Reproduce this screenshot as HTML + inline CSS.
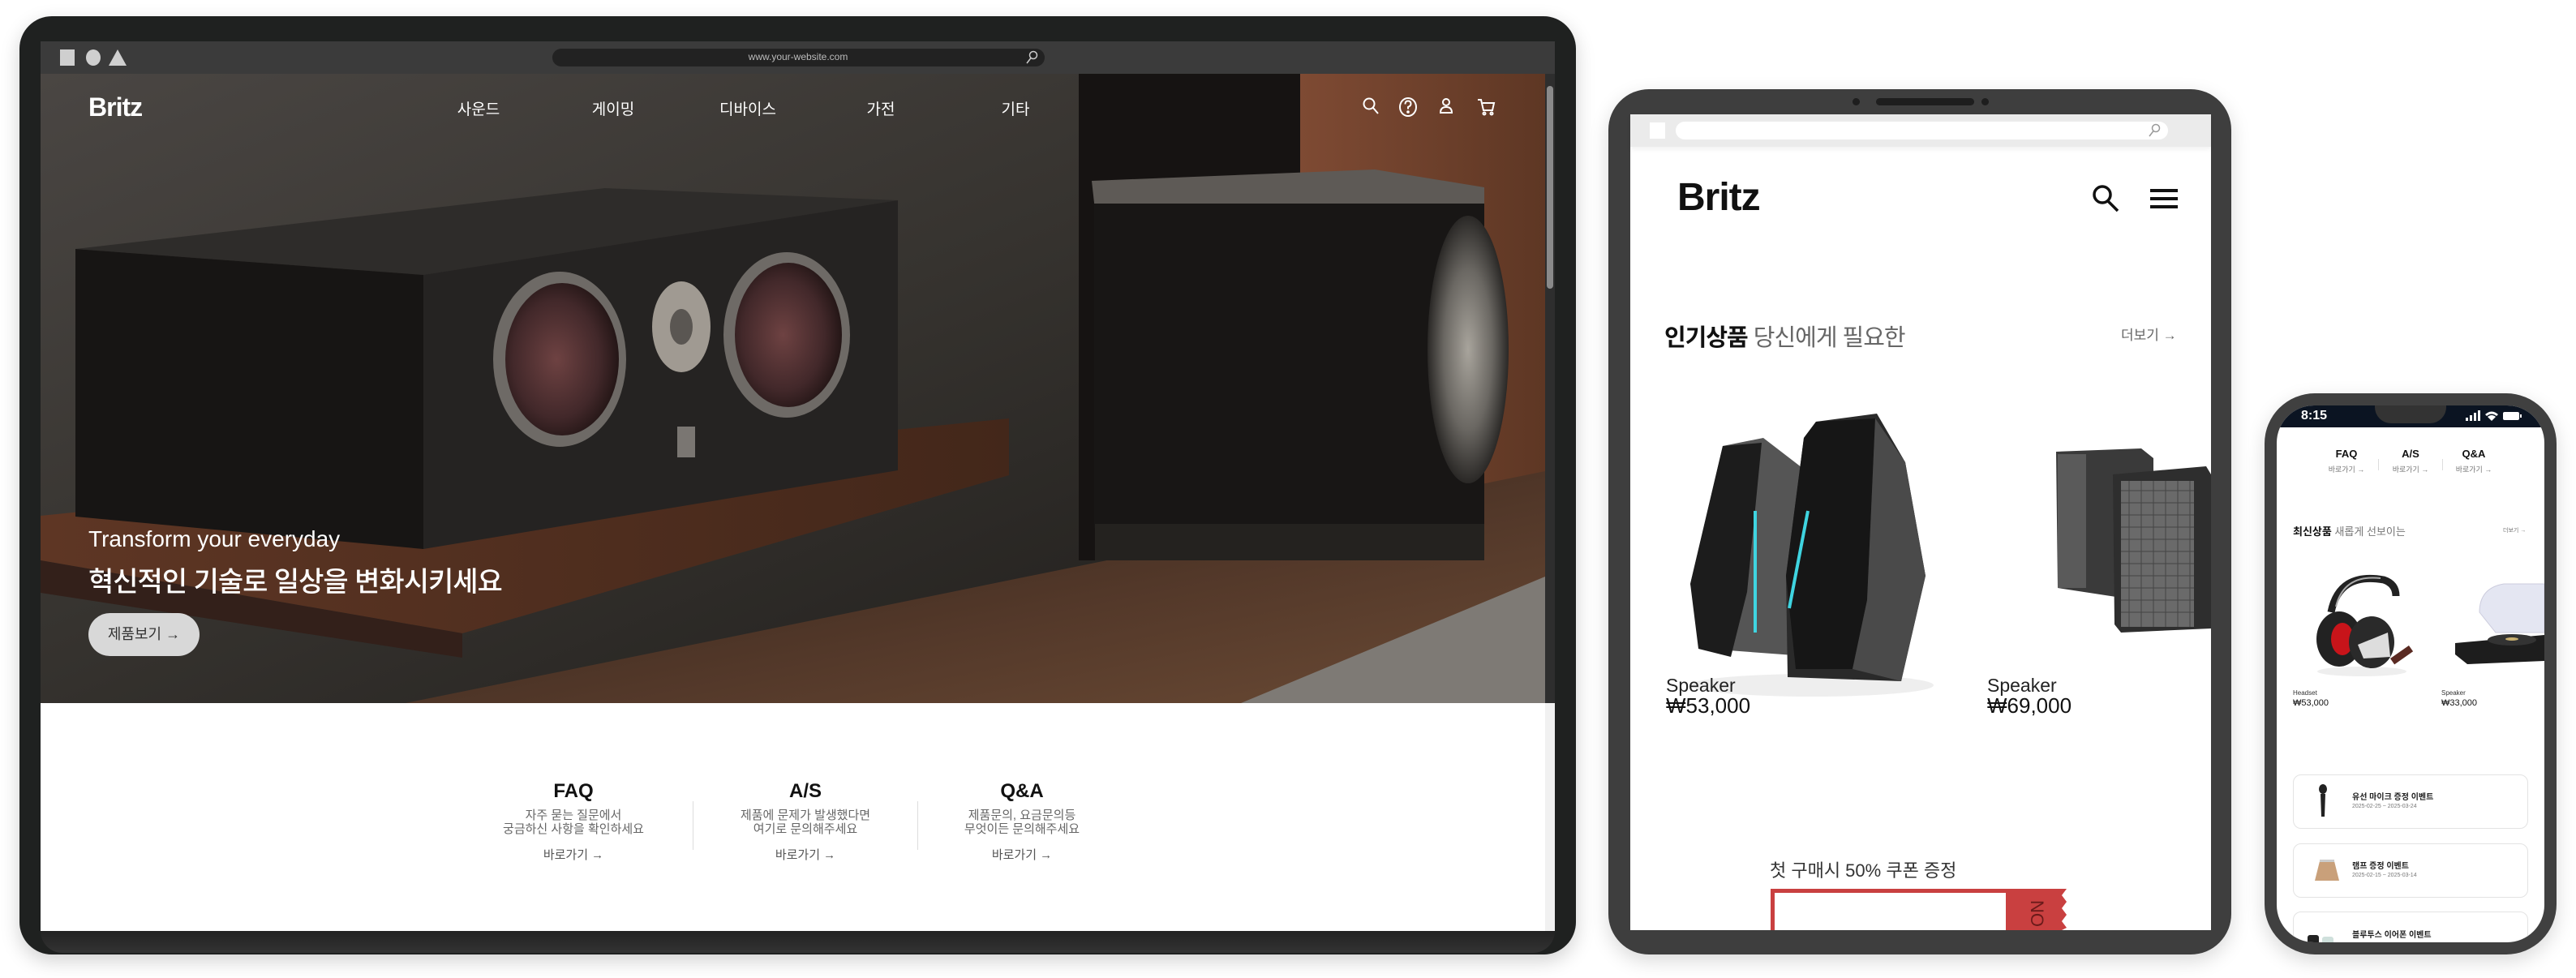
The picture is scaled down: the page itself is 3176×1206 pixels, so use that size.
<!DOCTYPE html>
<html><head><meta charset="utf-8">
<style>
*{margin:0;padding:0;box-sizing:border-box}
body{width:3176px;height:1206px;background:#fff;position:relative;overflow:hidden;font-family:"Liberation Sans","Noto Sans CJK KR",sans-serif}
.a{position:absolute}
.kr{font-family:"Liberation Sans","Noto Sans CJK KR",sans-serif}
.c{transform:translateX(-50%);white-space:nowrap;text-align:center}
</style></head><body>

<!-- LAPTOP -->
<div class="a" style="left:24px;top:20px;width:1919px;height:1157px;background:#1f2120;border-radius:40px;box-shadow:0 8px 24px rgba(0,0,0,.18)"></div>
<div class="a" style="left:50px;top:51px;width:1867px;height:40px;background:#3b3b3b"></div>
<div class="a" style="left:74px;top:61px;width:18px;height:20px;background:#cfcfcf"></div>
<div class="a" style="left:106px;top:61px;width:18px;height:20px;background:#cfcfcf;border-radius:50%"></div>
<div class="a" style="left:134px;top:61px;width:0;height:0;border-left:11px solid transparent;border-right:11px solid transparent;border-bottom:20px solid #cfcfcf"></div>
<div class="a" style="left:681px;top:60px;width:607px;height:22px;background:#222;border-radius:11px"></div>
<div class="a c" style="left:984px;top:63px;font-size:12px;color:#bbb">www.your-website.com</div>
<svg class="a" style="left:1264px;top:62px" width="16" height="18" viewBox="0 0 16 18"><circle cx="10" cy="6" r="4.5" fill="none" stroke="#ccc" stroke-width="1.5"/><line x1="7" y1="9.5" x2="2" y2="16" stroke="#ccc" stroke-width="1.5"/></svg>

<!-- hero -->
<svg class="a" style="left:50px;top:91px" width="1855" height="776" viewBox="0 0 1855 776">
<defs>
<linearGradient id="wall" x1="0" y1="0" x2="1" y2="1"><stop offset="0" stop-color="#4a4643"/><stop offset=".45" stop-color="#36332f"/><stop offset="1" stop-color="#1c1a18"/></linearGradient>
<linearGradient id="wood" x1="0" y1="0" x2="1" y2="0"><stop offset="0" stop-color="#5e3624"/><stop offset="1" stop-color="#43271a"/></linearGradient>
<linearGradient id="floor" x1="0" y1="0" x2="1" y2="1"><stop offset="0" stop-color="#2e2018"/><stop offset=".6" stop-color="#54392a"/><stop offset="1" stop-color="#6a4a34"/></linearGradient>
<linearGradient id="panel" x1="0" y1="0" x2="1" y2="0"><stop offset="0" stop-color="#7e4a33"/><stop offset="1" stop-color="#5e3724"/></linearGradient>
<radialGradient id="drv" cx=".45" cy=".5" r=".55"><stop offset="0" stop-color="#6e4242"/><stop offset=".7" stop-color="#42282a"/><stop offset="1" stop-color="#241616"/></radialGradient>
<radialGradient id="sub" cx=".5" cy=".5" r=".5"><stop offset="0" stop-color="#a8a49c"/><stop offset=".6" stop-color="#6a6762"/><stop offset="1" stop-color="#2a2826"/></radialGradient>
</defs>
<rect width="1855" height="776" fill="url(#wall)"/>
<rect x="1280" y="0" width="300" height="600" fill="#161312"/>
<rect x="1553" y="0" width="302" height="560" fill="url(#panel)"/>
<polygon points="450,776 1855,490 1855,776" fill="url(#floor)"/>
<polygon points="1480,776 1855,620 1855,776" fill="#7e7a75"/>
<!-- subwoofer -->
<polygon points="1296,132 1645,118 1780,140 1780,170 1300,168" fill="#5e5a56"/>
<rect x="1299" y="160" width="481" height="400" fill="#181615"/>
<rect x="1300" y="555" width="480" height="45" fill="#24221f"/>
<ellipse cx="1760" cy="340" rx="50" ry="165" fill="url(#sub)"/>
<!-- shelf -->
<polygon points="0,545 1194,425 1194,495 520,690 0,600" fill="url(#wood)"/>
<polygon points="0,600 520,690 520,720 0,640" fill="#33201a"/>
<!-- center speaker -->
<polygon points="43,216 696,141 1057,156 472,248" fill="#2e2c2a"/>
<polygon points="43,216 472,248 472,586 43,546" fill="#171514"/>
<polygon points="472,248 1057,156 1057,489 472,586" fill="#252322"/>
<ellipse cx="640" cy="352" rx="82" ry="108" fill="#6e6a66"/>
<ellipse cx="643" cy="352" rx="70" ry="94" fill="url(#drv)"/>
<ellipse cx="920" cy="322" rx="78" ry="102" fill="#6e6a66"/>
<ellipse cx="922" cy="322" rx="66" ry="89" fill="url(#drv)"/>
<ellipse cx="790" cy="312" rx="36" ry="56" fill="#a09a92"/>
<ellipse cx="790" cy="312" rx="14" ry="22" fill="#5a5652"/>
<rect x="785" y="435" width="22" height="38" fill="#7a7672"/>
</svg>
<div class="a" style="left:109px;top:114px;font-size:32px;font-weight:bold;color:#fff;letter-spacing:-1px">Britz</div>
<div class="a c kr" style="left:590px;top:120px;font-size:19px;color:#fff">사운드</div>
<div class="a c kr" style="left:756px;top:120px;font-size:19px;color:#fff">게이밍</div>
<div class="a c kr" style="left:922px;top:120px;font-size:19px;color:#fff">디바이스</div>
<div class="a c kr" style="left:1086px;top:120px;font-size:19px;color:#fff">가전</div>
<div class="a c kr" style="left:1252px;top:120px;font-size:19px;color:#fff">기타</div>
<svg class="a" style="left:1678px;top:118px" width="170" height="28" viewBox="0 0 170 28" fill="none" stroke="#fff" stroke-width="2">
<circle cx="10" cy="10" r="6.5"/><line x1="15" y1="15" x2="21" y2="22"/>
<ellipse cx="58" cy="14" rx="10" ry="11"/><path d="M54.5 10.5 q0-4 3.5-4 q3.5 0 3.5 3.5 q0 2.5-3.5 4 v2.5"/><circle cx="58" cy="20" r=".8" fill="#fff"/>
<circle cx="105" cy="8" r="4"/><path d="M98 21 q0-7 7-7 q7 0 7 7 z"/>
<path d="M144 5 h4 l3 13 h11 l2-9 h-14"/><circle cx="152" cy="22" r="1.5"/><circle cx="161" cy="22" r="1.5"/>
</svg>
<div class="a" style="left:109px;top:649px;font-size:28px;color:#fff">Transform your everyday</div>
<div class="a kr" style="left:109px;top:690px;font-size:34px;color:#fff;font-weight:500;letter-spacing:-1px">혁신적인 기술로 일상을 변화시키세요</div>
<div class="a kr" style="left:109px;top:756px;width:137px;height:53px;background:#d8d8d8;border-radius:27px;font-size:18px;color:#333;line-height:53px;text-align:center">제품보기 →</div>

<!-- white section -->
<div class="a" style="left:50px;top:867px;width:1855px;height:281px;background:#fff"></div>
<div class="a" style="left:1905px;top:91px;width:12px;height:776px;background:#2e2e2e"></div>
<div class="a" style="left:1905px;top:867px;width:12px;height:281px;background:#f1f1f1"></div>
<div class="a" style="left:1907px;top:106px;width:8px;height:250px;background:#8a8a8a;border-radius:4px"></div>

<div class="a c" style="left:707px;top:962px;font-size:24px;font-weight:bold;color:#111">FAQ</div>
<div class="a c kr" style="left:707px;top:997px;font-size:15px;line-height:17px;color:#666">자주 묻는 질문에서<br>궁금하신 사항을 확인하세요</div>
<div class="a c kr" style="left:707px;top:1043px;font-size:15px;color:#555">바로가기 →</div>
<div class="a" style="left:854px;top:988px;width:1px;height:60px;background:#ddd"></div>
<div class="a c" style="left:993px;top:962px;font-size:24px;font-weight:bold;color:#111">A/S</div>
<div class="a c kr" style="left:993px;top:997px;font-size:15px;line-height:17px;color:#666">제품에 문제가 발생했다면<br>여기로 문의해주세요</div>
<div class="a c kr" style="left:993px;top:1043px;font-size:15px;color:#555">바로가기 →</div>
<div class="a" style="left:1131px;top:988px;width:1px;height:60px;background:#ddd"></div>
<div class="a c" style="left:1260px;top:962px;font-size:24px;font-weight:bold;color:#111">Q&amp;A</div>
<div class="a c kr" style="left:1260px;top:997px;font-size:15px;line-height:17px;color:#666">제품문의, 요금문의등<br>무엇이든 문의해주세요</div>
<div class="a c kr" style="left:1260px;top:1043px;font-size:15px;color:#555">바로가기 →</div>
<div class="a" style="left:50px;top:1148px;width:1867px;height:27px;background:linear-gradient(#222,#333);border-radius:0 0 30px 30px"></div>

<!-- TABLET -->
<div class="a" style="left:1983px;top:110px;width:768px;height:1067px;background:#3e3e3e;border-radius:50px;box-shadow:0 8px 24px rgba(0,0,0,.15)"></div>
<div class="a" style="left:2284px;top:121px;width:9px;height:9px;background:#1e1e1e;border-radius:50%"></div>
<div class="a" style="left:2313px;top:121px;width:121px;height:9px;background:#1e1e1e;border-radius:5px"></div>
<div class="a" style="left:2443px;top:121px;width:9px;height:9px;background:#1e1e1e;border-radius:50%"></div>
<div class="a" style="left:2010px;top:141px;width:716px;height:1006px;background:#fff"></div>
<div class="a" style="left:2010px;top:141px;width:716px;height:40px;background:#ebebeb;box-shadow:0 3px 6px rgba(0,0,0,.06)"></div>
<div class="a" style="left:2034px;top:151px;width:19px;height:20px;background:#fff"></div>
<div class="a" style="left:2066px;top:150px;width:607px;height:22px;background:#fff;border-radius:11px"></div>
<svg class="a" style="left:2648px;top:152px" width="16" height="18" viewBox="0 0 16 18"><circle cx="10" cy="6" r="4.5" fill="none" stroke="#999" stroke-width="1.5"/><line x1="7" y1="9.5" x2="2" y2="16" stroke="#999" stroke-width="1.5"/></svg>
<div class="a" style="left:2068px;top:216px;font-size:48px;font-weight:bold;color:#111;letter-spacing:-1px">Britz</div>
<svg class="a" style="left:2578px;top:227px" width="38" height="36" viewBox="0 0 38 36" fill="none" stroke="#111" stroke-width="3.5"><circle cx="14" cy="13" r="10"/><line x1="21" y1="21" x2="33" y2="33"/></svg>
<svg class="a" style="left:2651px;top:233px" width="36" height="26" viewBox="0 0 36 26" fill="#111"><rect x="0" y="0" width="34" height="4"/><rect x="0" y="10" width="34" height="4"/><rect x="0" y="20" width="34" height="4"/></svg>
<div class="a kr" style="left:2052px;top:393px;font-size:29px;color:#111;font-weight:bold;letter-spacing:-1px">인기상품 <span style="font-weight:normal;color:#666">당신에게 필요한</span></div>
<div class="a kr" style="left:2615px;top:399px;font-size:17px;color:#666">더보기 →</div>
<svg class="a" style="left:2054px;top:480px" width="350" height="390" viewBox="0 0 350 390">
<ellipse cx="180" cy="365" rx="150" ry="14" fill="#eee"/>
<polygon points="70,70 120,60 185,110 185,330 50,320 30,240" fill="#555"/>
<polygon points="70,70 118,66 100,250 80,330 40,320 30,240" fill="#1c1c1c"/>
<line x1="110" y1="150" x2="110" y2="300" stroke="#3fd4e0" stroke-width="4"/>
<polygon points="185,40 260,30 295,90 320,230 290,360 150,355 148,230 170,60" fill="#2a2a2a"/>
<polygon points="185,40 258,36 248,260 230,345 160,345 148,230 170,60" fill="#161616"/>
<line x1="152" y1="270" x2="175" y2="150" stroke="#3fd4e0" stroke-width="4"/>
<line x1="272" y1="140" x2="262" y2="320" stroke="#3fd4e0" stroke-width="4"/>
<polygon points="258,36 295,90 320,230 290,360 230,345 248,260" fill="#4a4a4a"/>
</svg>
<svg class="a" style="left:2515px;top:545px" width="211" height="240" viewBox="0 0 211 240">
<polygon points="20,12 125,8 140,20 140,190 120,195 22,180" fill="#3a3a3a"/>
<rect x="22" y="15" width="35" height="165" fill="#5a5a5a"/>
<polygon points="90,40 205,30 211,40 211,230 100,235 92,225" fill="#2e2e2e"/>
<rect x="100" y="48" width="90" height="180" fill="#6a6a6a"/>
<g stroke="#444" stroke-width="1"><path d="M100 60h90M100 75h90M100 90h90M100 105h90M100 120h90M100 135h90M100 150h90M100 165h90M100 180h90M100 195h90M100 210h90M110 48v180M125 48v180M140 48v180M155 48v180M170 48v180M185 48v180"/></g>
</svg>
<div class="a" style="left:2054px;top:832px;font-size:23px;color:#222">Speaker</div>
<div class="a" style="left:2054px;top:855px;font-size:26px;color:#111">₩53,000</div>
<div class="a" style="left:2450px;top:832px;font-size:23px;color:#222">Speaker</div>
<div class="a" style="left:2450px;top:855px;font-size:26px;color:#111">₩69,000</div>
<div class="a kr" style="left:2182px;top:1056px;font-size:22px;color:#333">첫 구매시 50% 쿠폰 증정</div>
<div class="a" style="left:2183px;top:1096px;width:295px;height:51px;border:5px solid #c94040;border-bottom:none"></div>
<svg class="a" style="left:2476px;top:1096px" width="80" height="51" viewBox="0 0 80 51"><path d="M0 0h72l-6 8 6 8-6 8 6 8-6 8 6 8-6 3H0z" fill="#c94040"/><text x="28" y="14" transform="rotate(90 28 14)" font-family="Liberation Sans" font-size="22" fill="#6a1a1a">NO</text></svg>

<!-- PHONE -->
<div class="a" style="left:2792px;top:485px;width:360px;height:692px;background:#404040;border-radius:62px;box-shadow:0 8px 24px rgba(0,0,0,.15)"></div>
<div class="a" style="left:2807px;top:500px;width:330px;height:662px;background:#fff;border-radius:46px;overflow:hidden">
<div class="a" style="left:0;top:0;width:330px;height:27px;background:#0b1422"></div>
<div class="a" style="left:121px;top:0;width:88px;height:22px;background:#333;border-radius:0 0 20px 20px"></div>
<div class="a" style="left:30px;top:4px;font-size:16px;font-weight:bold;color:#fff">8:15</div>
<svg class="a" style="left:233px;top:6px" width="70" height="14" viewBox="0 0 70 14" fill="#fff"><rect x="0" y="9" width="3" height="4"/><rect x="5" y="6" width="3" height="7"/><rect x="10" y="3" width="3" height="10"/><rect x="15" y="0" width="3" height="13"/><path d="M24 5 q8-7 16 0 l-2 2 q-6-5-12 0z M27 8 q5-4 10 0 l-5 5z"/><rect x="46" y="2" width="20" height="10" rx="2"/><rect x="67" y="5" width="2" height="4"/></svg>
<div class="a c" style="left:86px;top:52px;font-size:13px;font-weight:bold;color:#111">FAQ</div>
<div class="a c kr" style="left:86px;top:72px;font-size:9px;color:#777">바로가기 →</div>
<div class="a" style="left:125px;top:66px;width:1px;height:14px;background:#ddd"></div>
<div class="a c" style="left:165px;top:52px;font-size:13px;font-weight:bold;color:#111">A/S</div>
<div class="a c kr" style="left:165px;top:72px;font-size:9px;color:#777">바로가기 →</div>
<div class="a" style="left:204px;top:66px;width:1px;height:14px;background:#ddd"></div>
<div class="a c" style="left:243px;top:52px;font-size:13px;font-weight:bold;color:#111">Q&amp;A</div>
<div class="a c kr" style="left:243px;top:72px;font-size:9px;color:#777">바로가기 →</div>
<div class="a kr" style="left:20px;top:145px;font-size:13px;font-weight:bold;color:#111">최신상품 <span style="font-weight:normal;color:#777">새롭게 선보이는</span></div>
<div class="a kr" style="left:279px;top:149px;font-size:7px;color:#777">더보기 →</div>
<svg class="a" style="left:45px;top:200px" width="130" height="140" viewBox="0 0 130 140">
<ellipse cx="60" cy="128" rx="55" ry="6" fill="#eee"/>
<path d="M22 55 q10-50 65-40 q15 5 15 20" fill="none" stroke="#222" stroke-width="9"/>
<path d="M28 48 q10-40 55-35" fill="none" stroke="#aaa" stroke-width="2"/>
<ellipse cx="32" cy="88" rx="28" ry="34" fill="#222"/><ellipse cx="36" cy="88" rx="14" ry="20" fill="#c8141a"/>
<ellipse cx="72" cy="92" rx="28" ry="32" fill="#2a2a2a"/><polygon points="55,95 92,80 95,110 62,112" fill="#ddd"/>
<rect x="95" y="112" width="28" height="9" fill="#5a2a22" transform="rotate(-35 95 112)"/>
</svg>
<svg class="a" style="left:220px;top:215px" width="110" height="110" viewBox="0 0 110 110">
<path d="M30 40 q0-30 30-35 l50 0 v60 l-60 0z" fill="#e4e6f2" stroke="#ccd" stroke-width="1"/>
<polygon points="0,78 110,68 110,100 15,104 0,92" fill="#1d1d1d"/>
<ellipse cx="70" cy="74" rx="30" ry="7" fill="#333"/><ellipse cx="70" cy="73" rx="8" ry="2" fill="#c9b070"/>
</svg>
<div class="a" style="left:20px;top:350px;font-size:8px;color:#333">Headset</div>
<div class="a" style="left:20px;top:361px;font-size:11px;color:#111">₩53,000</div>
<div class="a" style="left:203px;top:350px;font-size:8px;color:#333">Speaker</div>
<div class="a" style="left:203px;top:361px;font-size:11px;color:#111">₩33,000</div>
<div class="a" style="left:20px;top:455px;width:290px;height:67px;border:1px solid #e3e3e3;border-radius:10px"></div>
<svg class="a" style="left:52px;top:467px" width="10" height="42" viewBox="0 0 10 42"><ellipse cx="5" cy="6" rx="5" ry="6" fill="#222"/><path d="M2 12h6l-1 28h-4z" fill="#222"/></svg>
<div class="a kr" style="left:93px;top:474px;font-size:10px;font-weight:bold;color:#222">유선 마이크 증정 이벤트</div>
<div class="a" style="left:93px;top:491px;font-size:7px;color:#777">2025-02-25 ~ 2025-03-24</div>
<div class="a" style="left:20px;top:540px;width:290px;height:67px;border:1px solid #e3e3e3;border-radius:10px"></div>
<svg class="a" style="left:45px;top:560px" width="34" height="28" viewBox="0 0 34 28"><polygon points="8,2 26,2 32,26 2,26" fill="#c9a07a"/><rect x="8" y="0" width="18" height="3" fill="#ccc"/></svg>
<div class="a kr" style="left:93px;top:559px;font-size:10px;font-weight:bold;color:#222">램프 증정 이벤트</div>
<div class="a" style="left:93px;top:576px;font-size:7px;color:#777">2025-02-15 ~ 2025-03-14</div>
<div class="a" style="left:20px;top:624px;width:290px;height:67px;border:1px solid #e3e3e3;border-radius:10px"></div>
<svg class="a" style="left:38px;top:647px" width="40" height="18" viewBox="0 0 40 18"><rect x="0" y="6" width="14" height="12" rx="3" fill="#222"/><rect x="18" y="8" width="14" height="10" rx="3" fill="#cfe0dc"/></svg>
<div class="a kr" style="left:93px;top:644px;font-size:10px;font-weight:bold;color:#222">블루투스 이어폰 이벤트</div>
</div>
</body></html>
